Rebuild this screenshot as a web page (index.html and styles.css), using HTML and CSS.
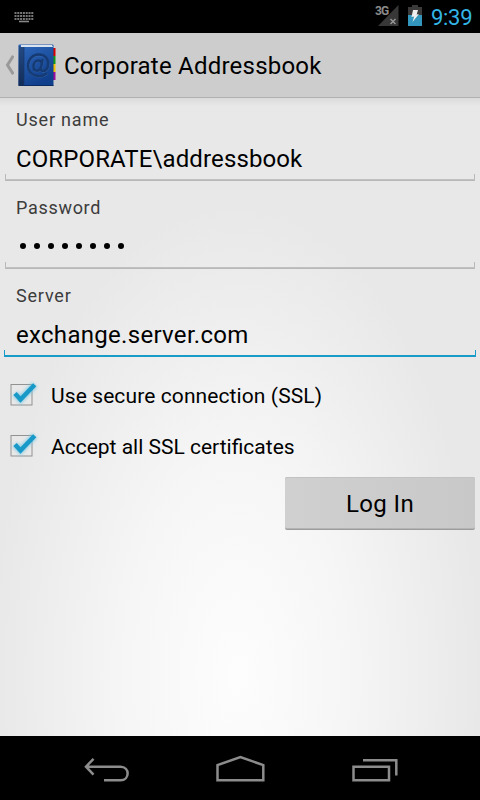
FILE: index.html
```html
<!DOCTYPE html>
<html lang="en">
<head>
<meta charset="utf-8">
<title>Corporate Addressbook</title>
<link rel="stylesheet" href="styles.css">
</head>
<body>
<div class="phone">
  <header class="status">
    <svg class="keyboard" width="20" height="11" viewBox="0 0 20 11" fill="none" stroke="#777">
      <path d="M.5 1h19M.5 4h19M.5 7h19" stroke-width="1.8" stroke-dasharray="2 .8"/>
      <path d="M5 9.5h10" stroke="#888" stroke-width="1.6"/>
    </svg>
    <div class="indicators">
      <div class="signal">
        <svg width="24" height="22" viewBox="0 0 24 22">
          <path d="M23.500 0v21H3z" fill="#373737"/>
          <path d="M15.500 14l5 5m0-5l-5 5" stroke="#999" stroke-width="1.4"/>
        </svg>
        <span class="network">3G</span>
      </div>
      <svg class="battery" width="14" height="21" viewBox="0 0 14 21">
        <path d="M4 0h6v2h4v8H0V2h4z" fill="#3a3a3a"/>
        <path d="M0 10h14v11H0z" fill="#3296bd"/>
        <path d="M5 5h5L8.700 9.500l2.300-.5L4.500 17l1.600-5.500L3.500 12z" fill="#eee"/>
      </svg>
      <span class="clock">9:39</span>
    </div>
  </header>
  <div class="bar">
    <svg class="up" width="10" height="20" viewBox="0 0 10 20"><path d="M9.300.8L3.500 10l5.800 9.200" fill="none" stroke="#999" stroke-width="3"/></svg>
    <svg class="book" width="39" height="44" viewBox="0 0 39 44">
      <defs>
        <linearGradient id="cover" x1="0" y1="0" x2=".5" y2="1"><stop offset="0" stop-color="#2f69bd"/><stop offset="1" stop-color="#103f8c"/></linearGradient>
        <linearGradient id="spine" x1="0" y1="0" x2="0" y2="1"><stop offset="0" stop-color="#234b85"/><stop offset="1" stop-color="#122c57"/></linearGradient>
      </defs>
      <path d="M33 5h4.500v8H33z" fill="#d40000"/>
      <path d="M33 13h4.500v8H33z" fill="#109618"/>
      <path d="M33 21h4.500v8H33z" fill="#f3c000"/>
      <path d="M33 29h4.500v8H33z" fill="#9a0c9e"/>
      <rect x=".5" y="1.500" width="35" height="41.500" rx="1" fill="url(#cover)"/>
      <path d="M3 2h31l1 2H3z" fill="#d9e3f0"/>
      <path d="M.8 2.500L3 4h3v39H.5z" fill="url(#spine)"/>
      <path d="M6 4v39" stroke="#17376a" stroke-width=".7"/>
      <path d="M6 42.500h29.500" stroke="#0b2a62"/>
      <g fill="none" stroke-linecap="round">
        <path d="M28.200 30.700C25.500 33 22.500 33.500 19.500 33 13.500 32 10 28 10 22.800 10 16.300 14.500 11.600 20.700 11.600c6 0 9.600 3.800 9.600 9 0 4.400-2.300 7.500-5 7.500-2 0-2.600-1.300-2.200-3.500l1.400-7.500M23.800 20.500c-.4-2-1.500-3-3.300-3-3 0-5 2.700-5 6 0 2.700 1.300 4.200 3.300 4.200 2.400 0 4-1.900 4.500-4.500" stroke="#3a6db4" stroke-width="2.200" transform="translate(.3 .5)"/>
        <path d="M28.200 30.700C25.500 33 22.500 33.500 19.500 33 13.500 32 10 28 10 22.800 10 16.300 14.500 11.600 20.700 11.600c6 0 9.600 3.800 9.600 9 0 4.400-2.300 7.500-5 7.500-2 0-2.600-1.300-2.200-3.500l1.400-7.500M23.800 20.500c-.4-2-1.500-3-3.300-3-3 0-5 2.700-5 6 0 2.700 1.300 4.200 3.300 4.200 2.400 0 4-1.900 4.500-4.500" stroke="#163a72" stroke-width="2.500"/>
      </g>
    </svg>
    <h1 class="title">Corporate Addressbook</h1>
  </div>
  <main class="form">
    <section class="field">
      <div class="label user">User name</div>
      <div class="value corp">CORPORATE\addressbook</div>
    </section>
    <section class="field">
      <div class="label pass">Password</div>
      <div class="value dots"><i></i><i></i><i></i><i></i><i></i><i></i><i></i><i></i></div>
    </section>
    <section class="field">
      <div class="label serv">Server</div>
      <div class="value focused exch">exchange.server.com</div>
    </section>
    <div class="checks">
      <div class="check">
        <svg width="36" height="36" viewBox="0 0 36 36"><rect x="7" y="9.500" width="21" height="20.500" fill="none" stroke="#929292"/><path class="tick" d="M11 18.500l5.500 6L30.700 9.700"/><path class="mark" d="M11 18.500l5.500 6L30.700 9.700"/></svg>
        <span class="ssl">Use secure connection (SSL)</span>
      </div>
      <div class="check">
        <svg width="36" height="36" viewBox="0 0 36 36"><rect x="7" y="9.500" width="21" height="20.500" fill="none" stroke="#929292"/><path class="tick" d="M11 18.500l5.500 6L30.700 9.700"/><path class="mark" d="M11 18.500l5.500 6L30.700 9.700"/></svg>
        <span class="cert">Accept all SSL certificates</span>
      </div>
    </div>
    <div class="actions"><button class="login"><span>Log In</span></button></div>
  </main>
  <nav class="nav">
    <svg width="480" height="64" viewBox="0 0 480 64" fill="none" stroke="#8c8c8c" stroke-width="2.500">
      <path d="M93.500 22.800L86 30.700l7.500 8M86 30.700h34.500c9.500 0 9.500 13.500 0 13.500H104"/>
      <path d="M217.500 44.200V29.100l22.900-8 22.900 8v15.100z"/>
      <path d="M353.500 30.800h35.500v13.400h-35.500zM363 24.200h33.300v15.300"/>
    </svg>
  </nav>
</div>
</body>
</html>
```
FILE: styles.css
```css
* { box-sizing: border-box; }
body { margin: 0; font-family: Roboto, "Liberation Sans", sans-serif; color: #000; }
.phone { width: 480px; height: 800px; display: flex; flex-direction: column; background: #000; overflow: hidden; }
.status { height: 33px; display: flex; justify-content: space-between; padding: 0 8px 0 14px; }
.keyboard { margin-top: 12px; }
.indicators { display: flex; }
.signal { position: relative; width: 24px; margin: 5px 9px 0 0; }
.signal svg { display: block; }
.network { position: absolute; left: 0; top: -1px; font-size: 12px; line-height: 14px; font-weight: 700; color: #8b8b8b; letter-spacing: -.9px; }
.battery { margin: 5px 9px 0 0; }
.clock { width: 41px; font-size: 22px; line-height: 35px; letter-spacing: -.3px; color: #33b5e5; white-space: nowrap; }
.bar { height: 65px; display: flex; align-items: center; background: #cdcdcd; border-bottom: 1px solid #b1b1b1; padding-left: 4px; }
.up { margin-right: 4px; }
.book { margin-right: 7px; }
.title { margin: 2px 0 0; font-size: 24px; font-weight: 400; line-height: 32px; letter-spacing: .22px; white-space: nowrap; }
.form {
  height: 638px; padding: 0 4px;
  background: linear-gradient(rgba(0,0,0,.06), transparent 8px), radial-gradient(ellipse 245px 470px at 236px 575px, #fdfdfd, #f6f6f6 45%, #e8e8e8);
}
.field { height: 88px; padding-top: 9px; }
.label { padding-left: 12px; height: 24px; font-size: 18px; line-height: 25px; color: #3c3c3c; letter-spacing: .7px; }
.label.user, .label.serv { letter-spacing: .8px; }
.value { height: 50px; padding: 0 12px; font-size: 24px; line-height: 56px; white-space: nowrap;
  background: linear-gradient(#c4c4c4,#b4b4b4) 1px 48px/470px 2px no-repeat, linear-gradient(#b9b9b9,#b9b9b9) 1px 43px/1px 5px no-repeat, linear-gradient(#b9b9b9,#b9b9b9) 470px 43px/1px 5px no-repeat; }
.value.focused { background: linear-gradient(#199bc9,#199bc9) 0 48px/472px 2px no-repeat, linear-gradient(#199bc9,#199bc9) 0 43px/1px 5px no-repeat, linear-gradient(#199bc9,#199bc9) 471px 43px/1px 5px no-repeat; }
.corp { letter-spacing: .12px; }
.exch { letter-spacing: .3px; }
.value.dots { display: flex; gap: 8px; padding: 24px 0 0 16px; }
.dots i { width: 6px; height: 6px; border-radius: 50%; background: #000; }
.checks { padding-top: 5px; }
.check { height: 51px; display: flex; align-items: center; }
.check span { margin-left: 11px; padding-top: 6px; font-size: 21px; line-height: 30px; white-space: nowrap; }
.ssl { letter-spacing: .1px; }
.tick { fill: none; stroke: #74c7e5; stroke-width: 7; filter: blur(1.8px); opacity: .7; }
.mark { fill: none; stroke: #1899c8; stroke-width: 4.500; }
.actions { display: flex; justify-content: flex-end; padding: 8px 1px 0 0; }
.login { width: 190px; height: 53px; border: 0; border-radius: 2px; padding: 2px 0 0; background: linear-gradient(90deg,#d0d0d0,#c8c8c8); border-bottom: 1px solid #9c9c9c; box-shadow: inset 0 1px #c2c2c2, inset 0 -1px #b4b4b4; font: 24px Roboto, sans-serif; letter-spacing: .4px; color: #000; }
.nav { height: 64px; }
.nav svg { display: block; }
```
